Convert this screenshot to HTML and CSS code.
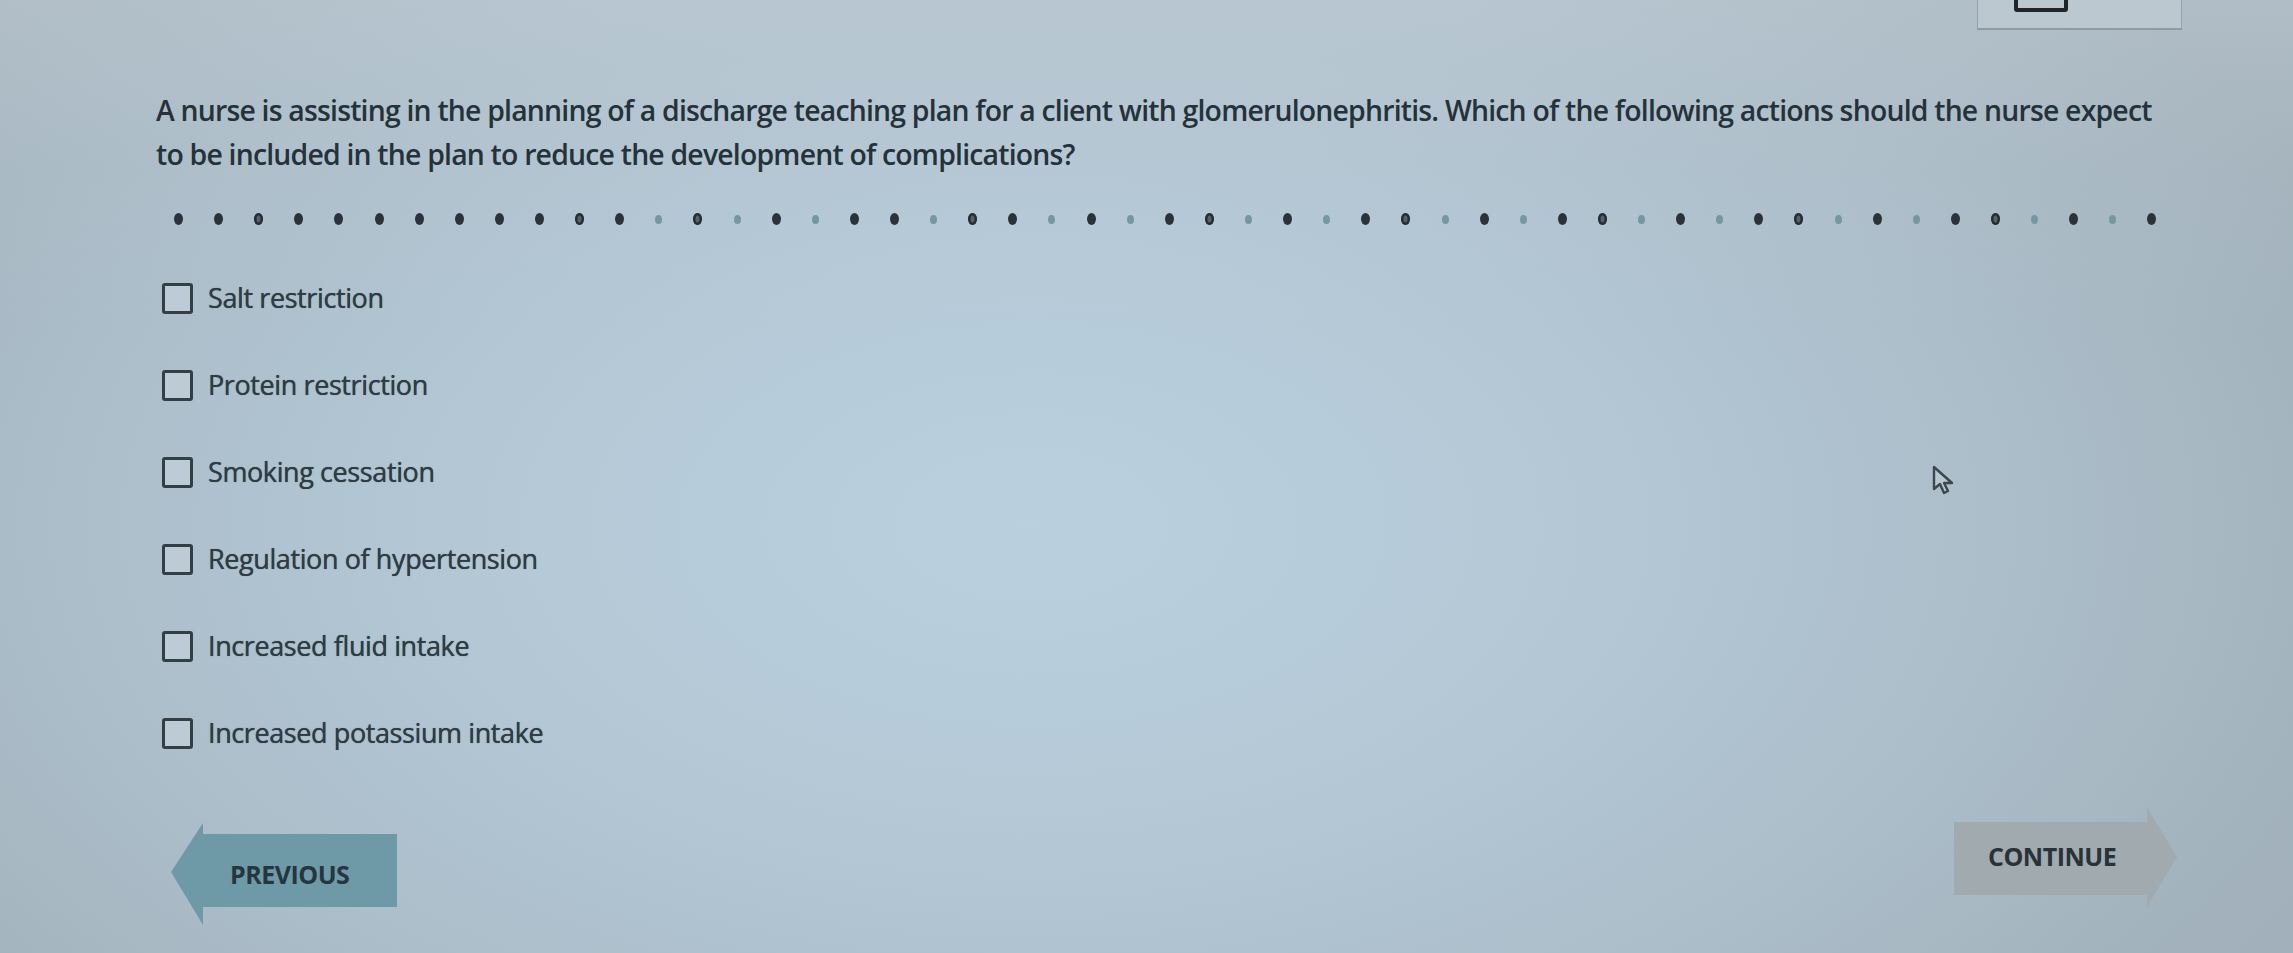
FILE: index.html
```html
<!DOCTYPE html>
<html lang="en">
<head>
<meta charset="utf-8">
<title>Question</title>
<link rel="stylesheet" href="styles.css">
</head>
<body>
<div class="screen">
  <header class="topbar">
    <div class="tab"><div class="tab-icon"></div></div>
  </header>

  <main class="content">
    <p class="question">A nurse is assisting in the planning of a discharge teaching plan for a client with glomerulonephritis. Which of the following actions should the nurse expect to be included in the plan to reduce the development of complications?</p>

    <div class="dots">
      <span class="dot d"></span><span class="dot d"></span><span class="dot r"></span><span class="dot d"></span><span class="dot d"></span><span class="dot d"></span><span class="dot d"></span><span class="dot d"></span><span class="dot d"></span><span class="dot d"></span>
      <span class="dot r"></span><span class="dot d"></span><span class="dot l"></span><span class="dot r"></span><span class="dot l"></span><span class="dot d"></span><span class="dot l"></span><span class="dot d"></span><span class="dot d"></span><span class="dot l"></span>
      <span class="dot r"></span><span class="dot d"></span><span class="dot l"></span><span class="dot d"></span><span class="dot l"></span><span class="dot d"></span><span class="dot r"></span><span class="dot l"></span><span class="dot d"></span><span class="dot l"></span>
      <span class="dot d"></span><span class="dot r"></span><span class="dot l"></span><span class="dot d"></span><span class="dot l"></span><span class="dot d"></span><span class="dot r"></span><span class="dot l"></span><span class="dot d"></span><span class="dot l"></span>
      <span class="dot d"></span><span class="dot r"></span><span class="dot l"></span><span class="dot d"></span><span class="dot l"></span><span class="dot d"></span><span class="dot r"></span><span class="dot l"></span><span class="dot d"></span><span class="dot l"></span>
      <span class="dot d"></span>
    </div>

    <ul class="options">
      <li class="option"><span class="box"></span><span class="label">Salt restriction</span></li>
      <li class="option"><span class="box"></span><span class="label">Protein restriction</span></li>
      <li class="option"><span class="box"></span><span class="label">Smoking cessation</span></li>
      <li class="option"><span class="box"></span><span class="label">Regulation of hypertension</span></li>
      <li class="option"><span class="box"></span><span class="label">Increased fluid intake</span></li>
      <li class="option"><span class="box"></span><span class="label">Increased potassium intake</span></li>
    </ul>
  </main>

  <footer class="nav">
    <button class="btn prev"><span>PREVIOUS</span></button>
    <button class="btn next"><span>CONTINUE</span></button>
  </footer>

  <svg class="cursor" width="22" height="32" viewBox="0 0 22 32">
    <path d="M2 2 L2 24 L8 19 L12 28 L16 26 L12 18 L20 18 Z" fill="#b7c8d3" stroke="#3d474d" stroke-width="2.4" stroke-linejoin="round"/>
  </svg>
</div>
</body>
</html>
```

FILE: styles.css
```css
html, body {
  margin: 0;
  padding: 0;
}

body {
  width: 2293px;
  height: 953px;
  overflow: hidden;
  font-family: "Open Sans", "Noto Sans", "Liberation Sans", sans-serif;
  color: #2c3a42;
}

.screen {
  position: relative;
  width: 2293px;
  height: 953px;
  background:
    linear-gradient(180deg, rgba(205, 214, 221, 0.35) 0%, rgba(205, 214, 221, 0.1) 18%, rgba(205, 214, 221, 0) 35%),
    radial-gradient(ellipse 62% 85% at 45% 55%, #bad0df 0%, #b5c9d7 35%, #abbdc9 70%, #a1b0ba 100%);
  display: flex;
  flex-direction: column;
}

.topbar {
  height: 30px;
  display: flex;
  justify-content: flex-end;
  padding-right: 111px;
}

.tab {
  width: 203px;
  height: 28px;
  border: 1px solid #97a3aa;
  border-top: none;
  border-bottom: 2px solid #8f9ba2;
  background: #bcc8cf;
  position: relative;
  overflow: hidden;
}

.tab-icon {
  position: absolute;
  left: 36px;
  top: -20px;
  width: 46px;
  height: 24px;
  border: 4px solid #1f2629;
  border-radius: 3px;
}

.content {
  padding-left: 156px;
}

.question {
  margin: 58px 0 0 0;
  width: 2000px;
  font-size: 28.4px;
  line-height: 44px;
  font-weight: 600;
  letter-spacing: -0.8px;
  color: #25323a;
}

.dots {
  margin: 37px 0 0 18px;
  width: 1983px;
  display: flex;
  justify-content: space-between;
  align-items: center;
  height: 12px;
}

.dot {
  width: 9px;
  height: 12px;
  border-radius: 50%;
  background: #2b3338;
}

.dot.r {
  background: #56626a;
  box-shadow: inset 0 0 0 2.5px #262e33;
}

.dot.l {
  width: 7px;
  height: 9px;
  background: #7597a2;
}

.options {
  list-style: none;
  margin: 57px 0 0 0;
  padding: 0 0 0 6px;
  display: flex;
  flex-direction: column;
  gap: 55px;
}

.option {
  display: flex;
  align-items: center;
  gap: 15px;
  height: 32px;
}

.box {
  width: 25px;
  height: 25px;
  border: 3px solid #333e45;
  border-radius: 3px;
  background: #bccbd5;
}

.label {
  font-size: 27px;
  line-height: 32px;
  color: #2f3c44;
  letter-spacing: -0.4px;
  text-shadow: 0 0 0.7px #2f3c44;
}

.nav {
  display: flex;
  justify-content: space-between;
  align-items: flex-start;
  padding: 0 116px 0 171px;
  margin-top: 58px;
}

.btn {
  border: none;
  padding: 0;
  font-family: "Open Sans", "Noto Sans", "Liberation Sans", sans-serif;
  font-weight: 700;
  font-size: 25px;
  letter-spacing: -0.5px;
  color: #25363f;
  display: flex;
  align-items: center;
  cursor: pointer;
}

.btn.prev {
  width: 226px;
  height: 102px;
  margin-top: 16px;
  background: #6e9aa8;
  clip-path: polygon(0 49px, 32px 0, 32px 11px, 226px 11px, 226px 84px, 32px 84px, 32px 102px);
  padding-left: 59px;
  padding-top: 0;
}

.btn.next {
  width: 223px;
  height: 100px;
  background: #a0aaaf;
  clip-path: polygon(0 15px, 193px 15px, 193px 0, 223px 50px, 193px 100px, 193px 88px, 0 88px);
  padding-left: 34px;
  padding-bottom: 2px;
  color: #283237;
}

.cursor {
  position: absolute;
  left: 1932px;
  top: 465px;
}
```
